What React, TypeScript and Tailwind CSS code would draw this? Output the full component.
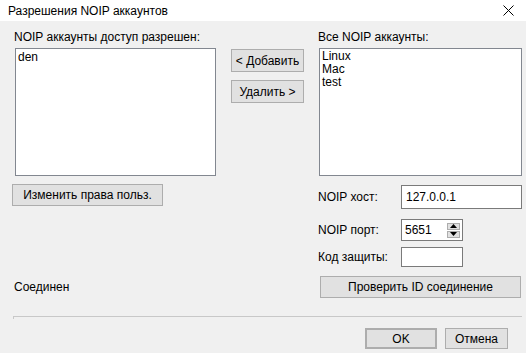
import React from 'react'

const font = { fontFamily: '"Liberation Sans", Arial, sans-serif' }

function Btn({ children, className = '' }: { children: React.ReactNode; className?: string }) {
  return (
    <div
      className={`flex items-center justify-center border border-[#adadad] bg-[#e1e1e1] text-[12px] leading-none text-black ${className}`}
    >
      {children}
    </div>
  )
}

function SpinArrows() {
  return (
    <div className="flex flex-col gap-px">
      <div className="flex h-[7px] w-[13px] items-center justify-center border border-[#adadad] bg-[#e1e1e1]">
        <svg width="7" height="4" viewBox="0 0 7 4">
          <path d="M0 4 L3.5 0 L7 4 Z" fill="#000" />
        </svg>
      </div>
      <div className="flex h-[7px] w-[13px] items-center justify-center border border-[#adadad] bg-[#e1e1e1]">
        <svg width="7" height="4" viewBox="0 0 7 4">
          <path d="M0 0 L7 0 L3.5 4 Z" fill="#000" />
        </svg>
      </div>
    </div>
  )
}

export default function App() {
  const all = ['Linux', 'Mac', 'test']

  return (
    <div className="flex h-[353px] w-[526px] flex-col bg-[#f0f0f0] text-[12px] text-black" style={font}>
      {/* заголовок окна */}
      <div className="flex h-[21px] items-center justify-between bg-white pl-2 pr-[12px]">
        <span className="text-[12px] leading-none">Разрешения NOIP аккаунтов</span>
        <svg width="11" height="11" viewBox="0 0 11 11" stroke="#000" strokeWidth="1">
          <path d="M0.5 0.5 L10.5 10.5 M10.5 0.5 L0.5 10.5" />
        </svg>
      </div>

      <div className="flex pt-[9px]">
        {/* левая колонка */}
        <div className="flex w-[216px] flex-col pl-[12px]">
          <span className="ml-[2px] h-[15px] leading-[15px]">NOIP аккаунты доступ разрешен:</span>
          <div className="ml-[3px] mt-[3px] h-[128px] w-[201px] border border-[#828790] bg-white px-[2px] pt-[1px] leading-[14px]">
            den
          </div>
          <Btn className="mt-[8px] h-[22px] w-[151px]">Изменить права польз.</Btn>
          <span className="mb-[3px] ml-[2px] mt-auto leading-[15px]">Соединен</span>
        </div>

        {/* кнопки посередине */}
        <div className="ml-[15px] flex flex-col gap-[8px] pt-[19px]">
          <Btn className="h-[23px] w-[73px]">&lt; Добавить</Btn>
          <Btn className="h-[23px] w-[73px]">Удалить &gt;</Btn>
        </div>

        {/* правая колонка */}
        <div className="ml-[14px] flex w-[204px] flex-col">
          <span className="h-[15px] leading-[15px]">Все NOIP аккаунты:</span>
          <div className="ml-px mt-[3px] h-[128px] w-[203px] border border-[#828790] bg-white px-[2px] pt-[1px] leading-[13px]">
            {all.map((a) => (
              <div key={a}>{a}</div>
            ))}
          </div>

          <div className="mt-[9px] flex items-center">
            <span className="w-[83px]">NOIP хост:</span>
            <div className="flex h-[24px] w-[121px] items-center border border-[#7a7a7a] bg-white px-[4px]">127.0.0.1</div>
          </div>
          <div className="mt-[10px] flex items-center">
            <span className="w-[83px]">NOIP порт:</span>
            <div className="flex h-[22px] w-[62px] items-center justify-between border border-[#7a7a7a] bg-white pl-[3px] pr-[2px]">
              <span>5651</span>
              <SpinArrows />
            </div>
          </div>
          <div className="mt-[6px] flex items-center">
            <span className="w-[83px]">Код защиты:</span>
            <div className="h-[20px] w-[62px] border border-[#7a7a7a] bg-white" />
          </div>
          <Btn className="ml-[2px] mt-[9px] h-[22px] w-[201px]">Проверить ID соединение</Btn>
        </div>
      </div>

      {/* разделитель */}
      <div className="ml-[13px] mr-[4px] mt-[18px] h-[3px] border-l border-t border-[#c8c8c8]" />

      <div className="mt-[9px] flex justify-end gap-[8px] pr-[18px]">
        <Btn className="h-[21px] w-[72px] border-2 border-[#0078d7]">OK</Btn>
        <Btn className="h-[21px] w-[63px]">Отмена</Btn>
      </div>
    </div>
  )
}
